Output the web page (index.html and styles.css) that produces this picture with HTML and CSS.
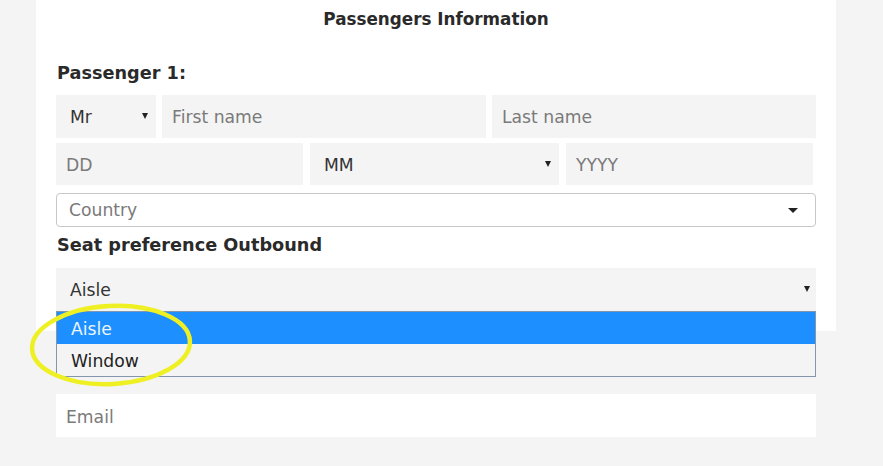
FILE: index.html
```html
<!DOCTYPE html>
<html>
<head>
<meta charset="utf-8">
<link rel="stylesheet" href="styles.css">
</head>
<body>
<div class="page">
  <section class="card">
    <h2 class="title">Passengers Information</h2>
    <h3 class="label">Passenger 1:</h3>
    <div class="row row-name">
      <div class="field select title-select"><span class="val">Mr</span><span class="caret-sm"></span></div>
      <div class="field"><span class="ph">First name</span></div>
      <div class="field"><span class="ph">Last name</span></div>
    </div>
    <div class="row row-date">
      <div class="field"><span class="ph">DD</span></div>
      <div class="field select"><span class="val">MM</span><span class="caret-sm"></span></div>
      <div class="field"><span class="ph">YYYY</span></div>
    </div>
    <div class="country"><span class="ph">Country</span><span class="caret-lg"></span></div>
    <h3 class="label seat-label">Seat preference Outbound</h3>
    <div class="field select seat"><span class="val">Aisle</span><span class="caret-sm"></span></div>
  </section>
  <div class="email-wrap">
    <div class="email"><span class="ph">Email</span></div>
  </div>
  <ul class="dropdown">
    <li class="opt active">Aisle</li>
    <li class="opt">Window</li>
  </ul>
  <svg class="circle" width="180" height="100" viewBox="0 0 180 100">
    <ellipse cx="90" cy="50" rx="79" ry="39" fill="none" stroke="#eef023" stroke-width="4.5" transform="rotate(-3 90 50)"/>
  </svg>
</div>
</body>
</html>
```

FILE: styles.css
```css
* { box-sizing: border-box; }
html, body { margin: 0; padding: 0; }
body {
  background: #f4f4f4;
  font-family: "DejaVu Sans", Verdana, sans-serif;
  color: #333;
  width: 883px;
  height: 466px;
  overflow: hidden;
}
.page { position: relative; height: 466px; }
.card {
  margin: 0 0 0 36px;
  width: 800px;
  background: #fff;
  padding: 0 20px 20px 20px;
}
.title {
  margin: 0;
  height: 36px;
  line-height: 38px;
  text-align: center;
  font-size: 16.8px;
  font-weight: bold;
  color: #2a2a2a;
}
.label {
  margin: 26px 0 0 1px;
  height: 22px;
  line-height: 22px;
  font-size: 17.7px;
  font-weight: bold;
  color: #2a2a2a;
}
.row { display: flex; gap: 6px; margin-top: 11px; }
.row-date { margin-top: 5px; width: 757px; gap: 7px; }
.field {
  background: #f4f4f4;
  height: 43px;
  flex: 1;
  display: flex;
  align-items: center;
  padding: 1px 10px 0 10px;
  font-size: 17.2px;
}
.row-date .field { height: 42px; }
.title-select { flex: 0 0 100px; padding-left: 14px; }
.select { justify-content: space-between; padding-left: 14px; padding-right: 8px; }
.ph { color: #7a7a7a; }
.val { color: #333; }
.caret-sm {
  width: 0; height: 0;
  border-left: 3px solid transparent;
  border-right: 3px solid transparent;
  border-top: 6px solid #222;
  margin-top: -2px;
}
.country {
  margin-top: 8px;
  height: 34px;
  border: 1px solid #c8c8c8;
  border-radius: 4px;
  display: flex;
  align-items: center;
  justify-content: space-between;
  padding: 0 17px 0 12px;
  font-size: 17.2px;
}
.caret-lg {
  width: 0; height: 0;
  border-left: 5px solid transparent;
  border-right: 5px solid transparent;
  border-top: 5px solid #222;
}
.seat-label { margin-top: 7px; }
.seat { margin-top: 12px; height: 43px; padding-right: 6px; }
.email-wrap { padding: 63px 67px 0 56px; }
.email {
  background: #fff;
  height: 43px;
  display: flex;
  align-items: center;
  padding: 3px 10px 0 10px;
  font-size: 17.2px;
}
.dropdown {
  position: absolute;
  left: 56px;
  top: 311px;
  width: 760px;
  margin: 0;
  padding: 0;
  list-style: none;
  border: 1px solid #8496ab;
  background: #f4f4f4;
}
.opt {
  height: 32px;
  line-height: 35px;
  padding-left: 14px;
  font-size: 17.2px;
  color: #222;
}
.opt.active { background: #1e8fff; color: #eaf6ff; }
.circle { position: absolute; left: 21px; top: 295px; }
```
